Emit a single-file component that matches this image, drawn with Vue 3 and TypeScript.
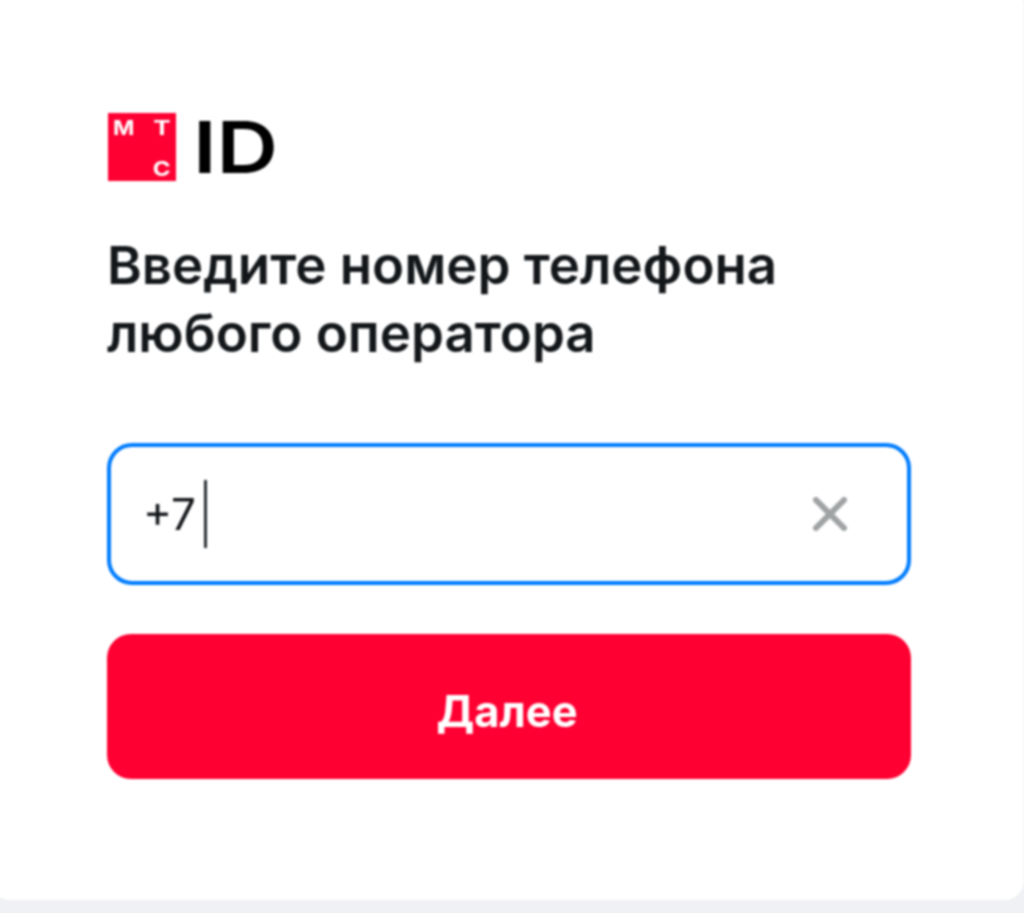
<script setup lang="ts">
const title: string[] = ['Введите номер телефона', 'любого оператора']
</script>

<template>
  <main class="page">
    <section class="card">
      <div class="logo">
        <div class="mark">
          <span class="m">М</span>
          <span class="t">Т</span>
          <span class="c">С</span>
        </div>
        <span class="id">ID</span>
      </div>
      <h1 class="title">
        <span v-for="line in title" :key="line" class="line">{{ line }}</span>
      </h1>
      <div class="field">
        <span class="value">+7</span>
        <span class="caret"></span>
        <svg class="clear" viewBox="0 0 34 34" width="34" height="34" aria-hidden="true">
          <path d="M3 3 L31 31 M31 3 L3 31" stroke="#a0a3a4" stroke-width="6" stroke-linecap="round" fill="none" />
        </svg>
      </div>
      <button class="next" type="button">Далее</button>
    </section>
  </main>
</template>

<style scoped>
.page {
  width: 1024px;
  height: 913px;
  overflow: hidden;
  background: #f0f1f4;
  font-family: Inter, "Noto Sans", sans-serif;
}
.card {
  box-sizing: border-box;
  width: 1034px;
  height: 914px;
  margin: -14px 0 0 -10px;
  padding: 127px 113px 0 117px;
  background: #fff;
  border-radius: 20px;
  filter: blur(0.8px);
}
.logo {
  display: flex;
  align-items: center;
  gap: 17px;
  height: 68px;
}
.mark {
  box-sizing: border-box;
  width: 68px;
  height: 68px;
  margin-left: 1px;
  padding: 3px 6px 0 5px;
  background: #ff0032;
  display: grid;
  grid-template-columns: 1fr 1fr;
  grid-template-rows: 1fr 1fr;
  color: #fff;
  font-size: 20px;
  font-weight: 700;
  line-height: 24px;
}
.m {
  transform: scaleX(1.15);
  transform-origin: left center;
}
.t {
  text-align: right;
  transform: scaleX(1.3);
  transform-origin: right center;
}
.c {
  grid-column: 2;
  align-self: end;
  text-align: right;
  transform: scaleX(1.2);
  transform-origin: right center;
}
.id {
  color: #000;
  font-size: 71px;
  font-weight: 600;
  line-height: 68px;
  transform: scaleX(1.2);
  transform-origin: left center;
}
.title {
  margin: 50px 0 0;
  color: #14171a;
  font-size: 52.8px;
  font-weight: 600;
  line-height: 68px;
}
.line {
  display: block;
  white-space: nowrap;
}
.field {
  box-sizing: border-box;
  height: 142px;
  margin-top: 76px;
  padding: 0 60px 0 32px;
  border: 4px solid #007cff;
  border-radius: 25px;
  display: flex;
  align-items: center;
  background: #fff;
}
.value {
  color: #14171a;
  font-size: 44px;
  line-height: 68px;
}
.caret {
  width: 2.5px;
  height: 68px;
  margin-left: 8px;
  background: #2c3033;
}
.clear {
  margin-left: auto;
}
.next {
  display: block;
  width: 804px;
  height: 145px;
  margin-top: 49px;
  padding: 8px 4px 0 0;
  border: 0;
  border-radius: 24px;
  background: #ff0032;
  color: #fff;
  font-family: inherit;
  font-size: 43.5px;
  font-weight: 700;
}
</style>
